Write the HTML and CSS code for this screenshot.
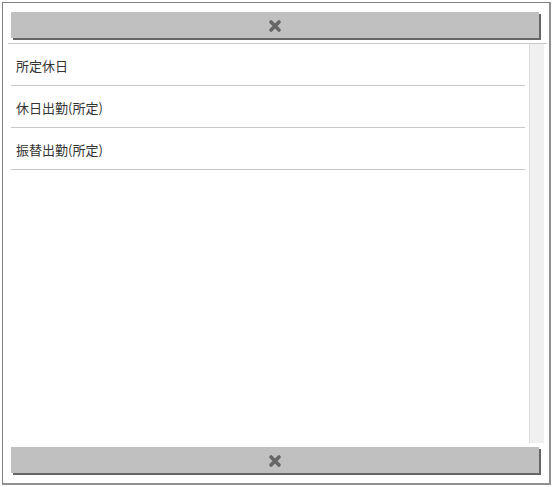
FILE: index.html
```html
<!DOCTYPE html>
<html lang="ja">

<head>
  <meta charset="UTF-8" />
  <meta name="viewport" content="width=device-width, initial-scale=1.0" />
  <title>勤務区分</title>
  <link rel="stylesheet" href="styles.css">
</head>

<body>
  <div class="picker">
    <div class="close-bar">
      <svg class="close-icon" width="14" height="14" viewBox="0 0 14 14">
        <path d="M3 3 L11 11 M11 3 L3 11" stroke="#666" stroke-width="3.6" stroke-linecap="round" />
      </svg>
    </div>

    <div class="list-area">
      <ul class="item-list">
        <li class="item">所定休日</li>
        <li class="item">休日出勤(所定)</li>
        <li class="item">振替出勤(所定)</li>
      </ul>
      <div class="scroll-track"></div>
    </div>

    <div class="close-bar bottom">
      <svg class="close-icon" width="14" height="14" viewBox="0 0 14 14">
        <path d="M3 3 L11 11 M11 3 L3 11" stroke="#666" stroke-width="3.6" stroke-linecap="round" />
      </svg>
    </div>
  </div>
</body>

</html>
```

FILE: styles.css
```css
body {
  margin: 0;
  padding: 2px;
  background: #fff;
  font-family: "Liberation Sans", "Noto Sans CJK JP", sans-serif;
}

.picker {
  box-sizing: border-box;
  width: 549px;
  height: 483px;
  background: #fff;
  border: 1px solid #808080;
  border-right: 2px solid #909090;
  border-bottom: 2px solid #909090;
  display: flex;
  flex-direction: column;
}

.close-bar {
  height: 26px;
  width: 528px;
  margin: 9px 0 0 8px;
  background: #c0c0c0;
  box-shadow: 2px 2px 0 #666;
  display: flex;
  justify-content: center;
  align-items: center;
  cursor: pointer;
}

.close-bar.bottom {
  margin-top: 4px;
}

.close-icon {
  display: block;
  margin-top: 1px;
}

.list-area {
  margin: 5px 0 0 5px;
  width: 536px;
  height: 399px;
  border-top: 1px solid #c8c8c8;
  display: flex;
  gap: 4px;
  padding-left: 3px;
}

.item-list {
  list-style: none;
  margin: 0;
  padding: 0;
  width: 514px;
}

.item {
  height: 42px;
  line-height: 38px;
  padding: 3px 0 0 5px;
  box-sizing: border-box;
  border-bottom: 1px solid #c8c8c8;
  font-size: 13px;
  color: #333;
  font-family: "Noto Sans CJK JP", sans-serif;
}

.scroll-track {
  width: 14px;
  background: #f0f0f0;
  border-left: 1px solid #dcdcdc;
}
```
